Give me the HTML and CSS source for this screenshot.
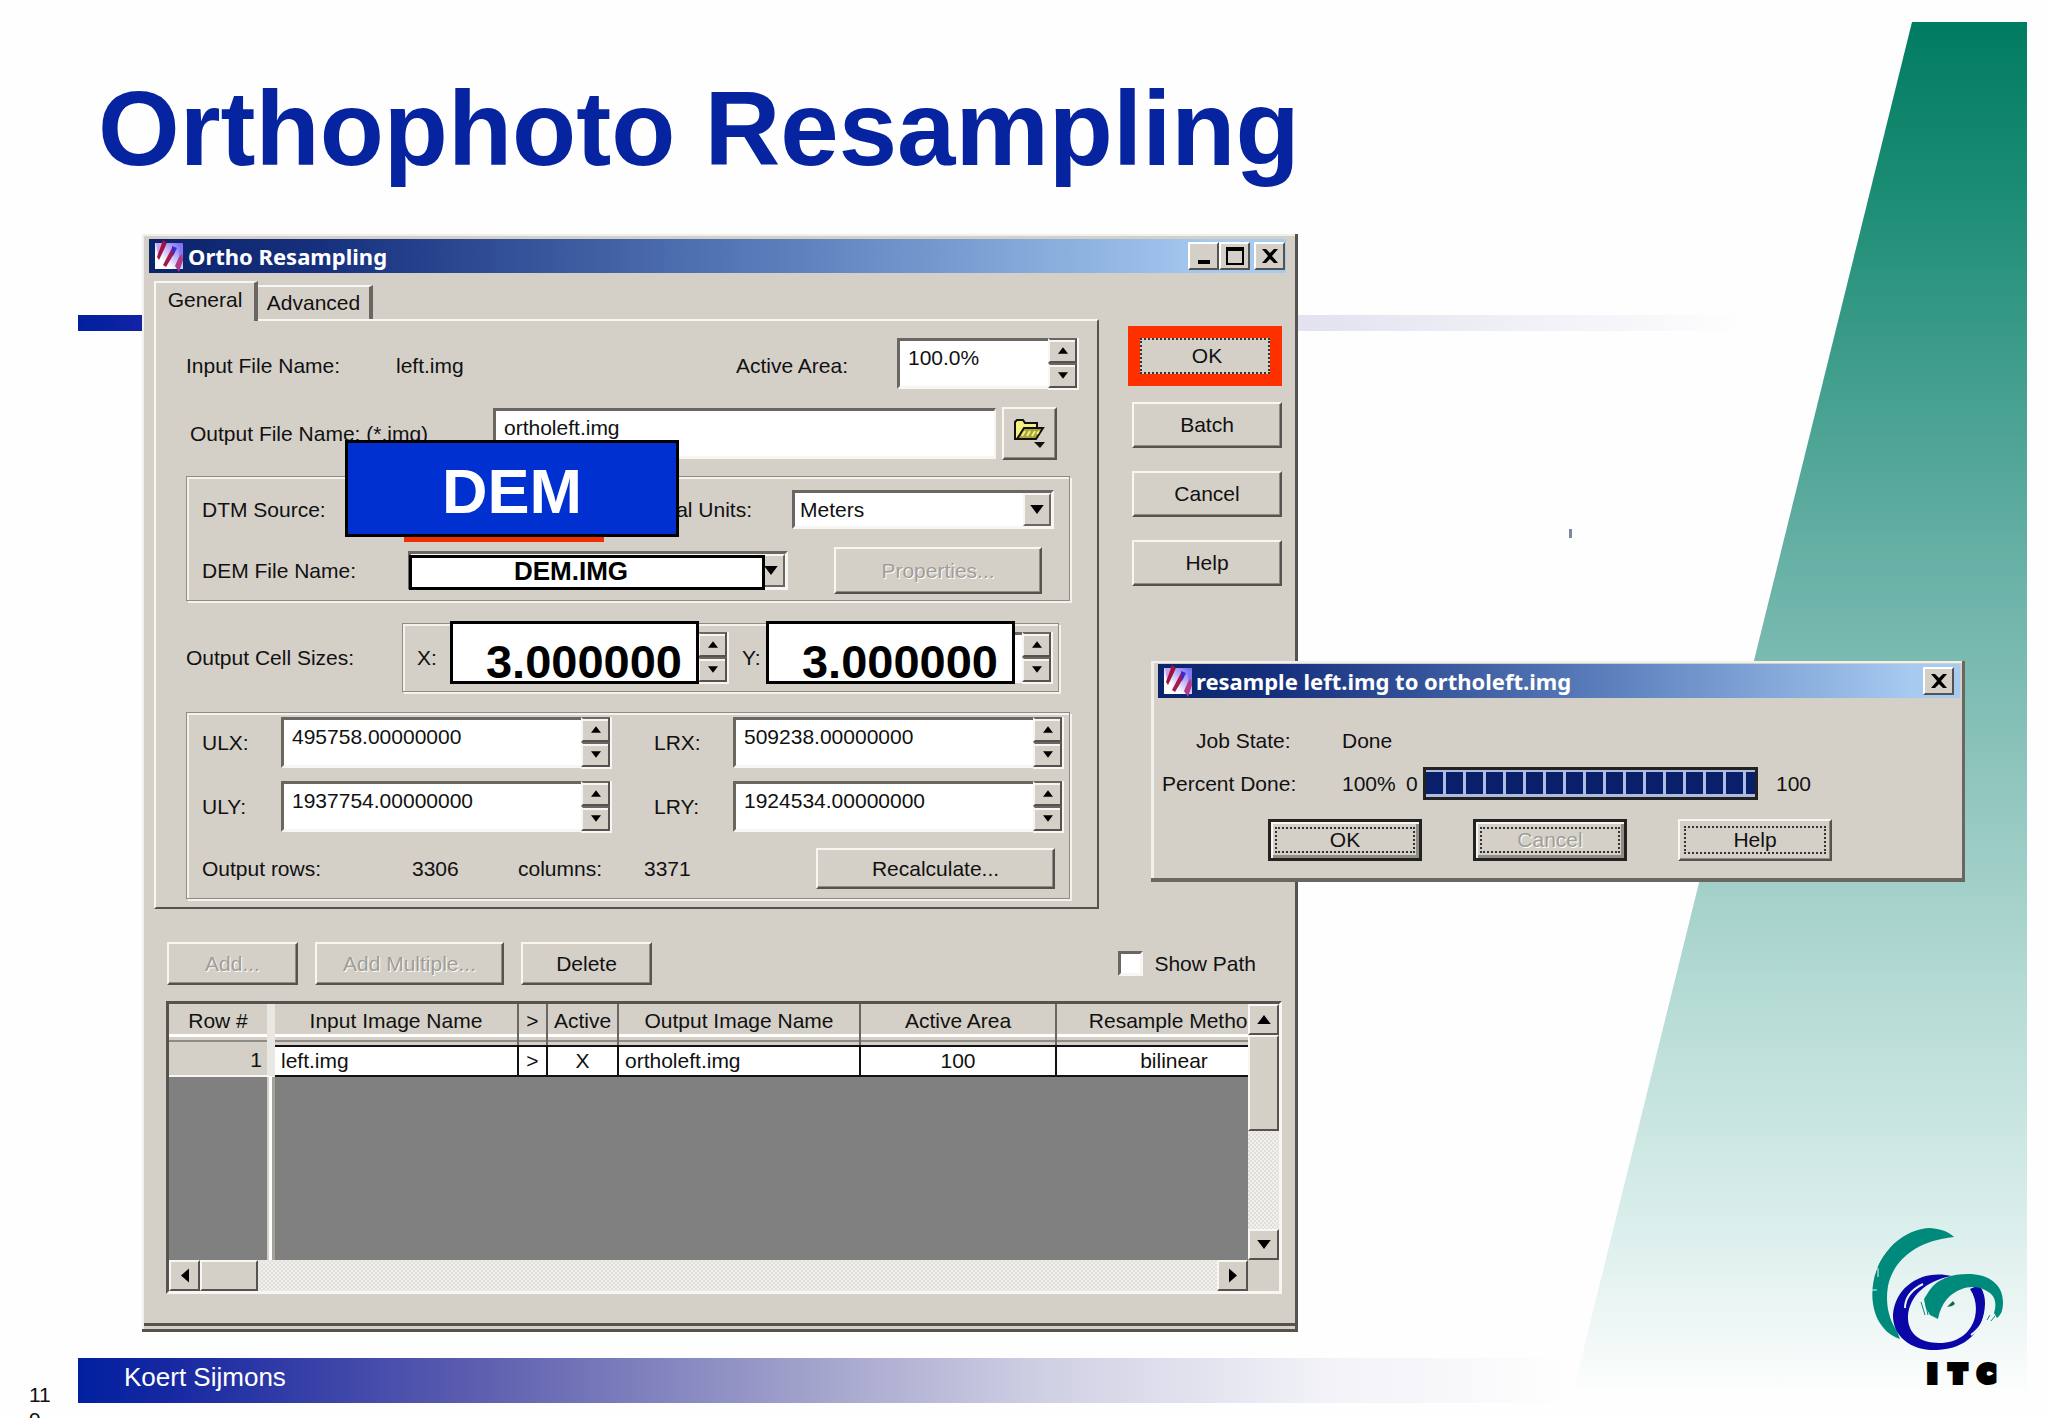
FILE: index.html
```html
<!DOCTYPE html>
<html lang="en">
<head>
<meta charset="utf-8">
<title>Orthophoto Resampling</title>
<link rel="stylesheet" href="styles.css">
</head>
<body>
<svg class="defs" aria-hidden="true">
  <defs>
    <linearGradient id="iconBg" x1="0" y1="1" x2="1" y2="0">
      <stop offset="0.3" stop-color="#ffffff"/>
      <stop offset="1" stop-color="#6a5cf0"/>
    </linearGradient>
    <symbol id="app-icon" viewBox="0 0 28 32">
      <rect x="0" y="3" width="28" height="26" fill="url(#iconBg)"/>
      <path d="M1 3h11l-4 9-5 3z" fill="#c9a4ec"/>
      <path d="M8 0L2 17l2 3 8-17z" fill="#a3123f"/>
      <path d="M18 6L8 25l3 2 9-15z" fill="#a5194f"/>
      <path d="M27 10l-7 16 4 6 4-12z" fill="#b03a86"/>
      <path d="M17 6l5 2-4 8z" fill="#3a2bd0"/>
      <path d="M25 3l3 2v8l-4 4z" fill="#8476f4"/>
    </symbol>
    <symbol id="up" viewBox="0 0 12 8"><path d="M6 0l6 8H0z"/></symbol>
    <symbol id="down" viewBox="0 0 12 8"><path d="M0 0h12L6 8z"/></symbol>
    <symbol id="left" viewBox="0 0 8 14"><path d="M8 0v14L0 7z"/></symbol>
    <symbol id="right" viewBox="0 0 8 14"><path d="M0 0v14l8-7z"/></symbol>
    <symbol id="close" viewBox="0 0 16 14"><path d="M0 0h4l4 4 4-4h4l-6 7 6 7h-4l-4-4-4 4H0l6-7z"/></symbol>
  </defs>
</svg>

<main class="slide">
  <div class="wedge"></div>
  <h1 class="headline">Orthophoto Resampling</h1>
  <div class="rule"></div>
  <div class="speck"></div>

  <section class="window window-main" aria-label="Ortho Resampling">
    <header class="titlebar">
      <svg class="app-icon"><use href="#app-icon"/></svg>
      <h2 class="caption">Ortho Resampling</h2>
      <button class="chrome" type="button" aria-label="Minimize"><svg width="20" height="18"><rect x="4" y="13" width="12" height="4"/></svg></button>
      <button class="chrome" type="button" aria-label="Maximize"><svg width="20" height="18"><path d="M1 0h18v18H1zM3 4v12h14V4z" fill-rule="evenodd"/></svg></button>
      <button class="chrome chrome-close" type="button" aria-label="Close"><svg width="16" height="14"><use href="#close"/></svg></button>
    </header>

    <div class="body">
      <div class="tabbed">
        <div class="tabs" role="tablist">
          <button class="tab tab-active" role="tab" type="button">General</button>
          <button class="tab" role="tab" type="button">Advanced</button>
        </div>
        <div class="panel">
          <div class="row row-input">
            <span>Input File Name:</span>
            <span>left.img</span>
            <label for="area">Active Area:</label>
            <div class="spin">
              <input id="area" type="text" value="100.0%">
              <div class="steps"><button type="button" aria-label="Increase"><svg class="tri"><use href="#up"/></svg></button><button type="button" aria-label="Decrease"><svg class="tri"><use href="#down"/></svg></button></div>
            </div>
          </div>

          <div class="row row-output">
            <label class="output-label" for="out">Output File Name: (*.img)</label>
            <input id="out" class="field" type="text" value="ortholeft.img">
            <button class="btn folder" type="button" aria-label="Browse">
              <svg width="34" height="30" viewBox="0 0 34 30">
                <path d="M2 20V3l2-2h6l2 3h12v5H12L5 20z" fill="#f4f27c" stroke="#111" stroke-width="2"/>
                <path d="M4 20l7-11h19l-7 11z" fill="#a7a43c" stroke="#111" stroke-width="2"/>
                <path d="M9 17l3-5M14 17l3-5M19 17l3-5M24 15l2-3" stroke="#f4f27c" stroke-width="2"/>
                <path d="M21 23h11l-5 6z" fill="#111"/>
              </svg>
            </button>
          </div>

          <div class="group group-dtm">
            <div class="row row-source">
              <span class="grow">DTM Source:</span>
              <label for="units">Vertical Units:</label>
              <div class="combo combo-units">
                <select id="units"><option>Meters</option></select>
                <span class="drop"><svg class="tri-big"><use href="#down"/></svg></span>
              </div>
            </div>
            <div class="row row-dem">
              <label class="dem-label" for="dem">DEM File Name:</label>
              <div class="combo combo-dem">
                <select id="dem"><option></option></select>
                <span class="drop"><svg class="tri-big"><use href="#down"/></svg></span>
              </div>
              <button class="btn btn-properties" type="button" disabled>Properties...</button>
            </div>
          </div>

          <div class="row row-cells">
            <span class="cells-label">Output Cell Sizes:</span>
            <div class="group group-cells">
              <label for="cx">X:</label>
              <div class="spin"><input id="cx" type="text"><div class="steps"><button type="button" aria-label="Increase"><svg class="tri"><use href="#up"/></svg></button><button type="button" aria-label="Decrease"><svg class="tri"><use href="#down"/></svg></button></div></div>
              <label for="cy">Y:</label>
              <div class="spin"><input id="cy" type="text"><div class="steps"><button type="button" aria-label="Increase"><svg class="tri"><use href="#up"/></svg></button><button type="button" aria-label="Decrease"><svg class="tri"><use href="#down"/></svg></button></div></div>
            </div>
          </div>

          <div class="group group-extent">
            <div class="extent">
              <label for="ulx">ULX:</label>
              <div class="spin"><input id="ulx" type="text" value="495758.00000000"><div class="steps"><button type="button" aria-label="Increase"><svg class="tri"><use href="#up"/></svg></button><button type="button" aria-label="Decrease"><svg class="tri"><use href="#down"/></svg></button></div></div>
              <label for="lrx">LRX:</label>
              <div class="spin"><input id="lrx" type="text" value="509238.00000000"><div class="steps"><button type="button" aria-label="Increase"><svg class="tri"><use href="#up"/></svg></button><button type="button" aria-label="Decrease"><svg class="tri"><use href="#down"/></svg></button></div></div>
              <label for="uly">ULY:</label>
              <div class="spin"><input id="uly" type="text" value="1937754.00000000"><div class="steps"><button type="button" aria-label="Increase"><svg class="tri"><use href="#up"/></svg></button><button type="button" aria-label="Decrease"><svg class="tri"><use href="#down"/></svg></button></div></div>
              <label for="lry">LRY:</label>
              <div class="spin"><input id="lry" type="text" value="1924534.00000000"><div class="steps"><button type="button" aria-label="Increase"><svg class="tri"><use href="#up"/></svg></button><button type="button" aria-label="Decrease"><svg class="tri"><use href="#down"/></svg></button></div></div>
            </div>
            <div class="row row-size">
              <span>Output rows:</span><span>3306</span><span>columns:</span><span>3371</span>
              <button class="btn" type="button">Recalculate...</button>
            </div>
          </div>
        </div>
      </div>

      <div class="actions">
        <button class="btn btn-marked" type="button">OK</button>
        <button class="btn" type="button">Batch</button>
        <button class="btn" type="button">Cancel</button>
        <button class="btn" type="button">Help</button>
      </div>
    </div>

    <div class="row toolbar">
      <button class="btn btn-add" type="button" disabled>Add...</button>
      <button class="btn btn-multiple" type="button" disabled>Add Multiple...</button>
      <button class="btn btn-add" type="button">Delete</button>
      <label class="show-path"><input type="checkbox">Show Path</label>
    </div>

    <div class="grid-frame">
      <div class="grid-view">
        <table class="images">
          <colgroup>
            <col class="c-row"><col class="c-in"><col class="c-arrow"><col class="c-active"><col class="c-out"><col class="c-area"><col class="c-method">
          </colgroup>
          <thead>
            <tr><th>Row #</th><th>Input Image Name</th><th>&gt;</th><th>Active</th><th>Output Image Name</th><th>Active Area</th><th>Resample Method</th></tr>
          </thead>
          <tbody>
            <tr><th>1</th><td>left.img</td><td class="mid">&gt;</td><td class="mid">X</td><td>ortholeft.img</td><td class="mid">100</td><td class="mid">bilinear</td></tr>
          </tbody>
        </table>
      </div>
      <div class="scroll scroll-y">
        <button type="button" aria-label="Scroll up"><svg class="tri-big"><use href="#up"/></svg></button>
        <span class="thumb"></span>
        <button class="last" type="button" aria-label="Scroll down"><svg class="tri-big"><use href="#down"/></svg></button>
      </div>
      <div class="scroll scroll-x">
        <button type="button" aria-label="Scroll left"><svg class="tri-side"><use href="#left"/></svg></button>
        <span class="thumb"></span>
        <button class="last" type="button" aria-label="Scroll right"><svg class="tri-side"><use href="#right"/></svg></button>
      </div>
    </div>

    <div class="callout callout-dem">DEM</div>
    <div class="callout callout-file">DEM.IMG</div>
    <div class="callout callout-size callout-x">3.000000</div>
    <div class="callout callout-size callout-y">3.000000</div>
  </section>

  <section class="window window-job" aria-label="Job status">
    <header class="titlebar">
      <svg class="app-icon"><use href="#app-icon"/></svg>
      <h2 class="caption">resample left.img to ortholeft.img</h2>
      <button class="chrome chrome-close" type="button" aria-label="Close"><svg width="16" height="14"><use href="#close"/></svg></button>
    </header>
    <div class="job-state"><span>Job State:</span><span>Done</span></div>
    <div class="job-progress">
      <label for="job">Percent Done:</label><span>100%</span><span>0</span>
      <progress id="job" max="100" value="100"></progress>
      <span>100</span>
    </div>
    <div class="job-actions">
      <button class="btn btn-default" type="button">OK</button>
      <button class="btn btn-default" type="button" disabled>Cancel</button>
      <button class="btn" type="button">Help</button>
    </div>
  </section>

  <svg class="logo" viewBox="0 0 144 166" role="img" aria-label="ITC">
    <path d="M84 9C79 4 72 1 60 0 38 1 18 16 8 38-1 60 1 84 12 98c6 8 12 11 18 13l-3-8C19 92 15 76 18 58 23 34 44 13 84 9z" fill="#008a7c"/>
    <path d="M27 12C16 22 8 33 5 45M2 62h5M8 40v9" fill="none" stroke="#e4f2f0" stroke-width="1"/>
    <path d="M82 48C52 41 26 58 23 86c-1 22 18 37 44 36 29-1 47-19 48-46 0-8-2-14-6-19l-9 4c6 9 7 19 5 28-4 16-17 26-36 26-20 0-32-10-31-28 2-18 16-34 44-39z" fill="#0a06a8"/>
    <path d="M53 56C43 61 35 69 35 80M117 74c0 16-6 26-16 33" fill="none" stroke="#e9f4f3" stroke-width="2"/>
    <path d="M68 91l-8-4-4-7-2-9 5-8C68 50 82 46 98 46c20 0 35 10 35 28 0 8-2 13-6 16l-3-5c3-9 1-16-4-20-10-7-20-7-28-4-12 4-21 14-24 30z" fill="#008a7c"/>
    <path d="M51 74l4 13M55 73l3 14M120 87l-3 5M125 88l-4 5" fill="none" stroke="#008a7c" stroke-width="1"/>
    <path d="M77 79l6-6 2 3-3 2z" fill="#0b6b3a"/>
    <text class="logo-text" x="58 80 108" y="154">ITC</text>
  </svg>

  <footer class="footer">
    <div class="page-no">119</div>
    <div class="author">Koert Sijmons</div>
  </footer>
</main>
</body>
</html>
```
FILE: styles.css
```css
* { box-sizing: border-box; }

body {
  margin: 0;
  background: #fefefe;
  color: #111;
  font: 21px/28px "Liberation Sans", Arial, sans-serif;
}

button, input, select {
  margin: 0;
  padding: 0;
  border: 0;
  border-radius: 0;
  color: inherit;
  font: inherit;
  appearance: none;
}

svg { display: block; flex: none; }
.defs { position: absolute; width: 0; height: 0; }

/* Slide */
.slide {
  position: relative;
  display: flex;
  flex-direction: column;
  height: 100vh;
  min-height: 1418px;
  overflow: hidden;
}

.wedge {
  position: absolute;
  top: 22px;
  right: 21px;
  bottom: 18px;
  width: 456px;
  background: linear-gradient(#007c62, #1b8c74 12%, #6fb4aa 42%, #b4dad4 70%, #dcefec 88%, #fefefe);
  clip-path: polygon(341px 0, 100% 0, 100% 100%, 0 100%);
}

.headline {
  position: relative;
  margin: 68px 0 0 98px;
  color: #0624a0;
  font-weight: bold;
  font-size: 105px;
  line-height: 122px;
}

.rule {
  width: 1670px;
  max-width: 100%;
  height: 16px;
  margin: 125px 0 0 78px;
  background: linear-gradient(90deg, #0020a0, #1422a5 4%, #a0a0cc 45%, #e2e2f0 73%, #fefefe);
}

.speck {
  position: absolute;
  top: 529px;
  left: 1569px;
  width: 3px;
  height: 9px;
  background: #8088a0;
}

.footer {
  display: flex;
  height: 60px;
  margin-top: auto;
}

.page-no {
  flex: none;
  width: 54px;
  margin: 24px 24px 0 0;
  padding-left: 29px;
  line-height: 25px;
  word-break: break-all;
}

.author {
  flex: 0 1 1760px;
  height: 45px;
  padding: 3px 46px;
  background: linear-gradient(90deg, #0020a0, #1a2aa2 6%, #5a5cae 22%, #a3a4cc 42%, #d0d0e4 55%, #f2f2f8 71%, #fefefe 85%);
  color: #fff;
  font-size: 26px;
  line-height: 32px;
}

.logo {
  position: absolute;
  right: 34px;
  bottom: 24px;
  width: 144px;
  height: 166px;
}

.logo-text {
  fill: #000;
  stroke: #000;
  stroke-width: 6px;
  font: bold 23px "DejaVu Sans", sans-serif;
}

/* Windows */
.window {
  position: absolute;
  background: #d4d0c8;
}

.window-main {
  top: 234px;
  left: 142px;
  width: 1156px;
  padding: 5px 9px 35px 7px;
  border: solid #55524f;
  border-width: 0 3px 3px 0;
  box-shadow: inset 2px 2px #f2f0ec, inset 0 -3px #d4d0c8, inset 0 -6px #55524f;
}

.titlebar {
  display: flex;
  align-items: center;
  height: 34px;
  padding: 0 1px 0 6px;
  background: linear-gradient(90deg, #0a246a, #16307e 15%, #5f83bf 58%, #a6caf0 94%);
}

.app-icon { width: 28px; height: 32px; }

.caption {
  flex: 1;
  margin: 0 0 0 5px;
  color: #fff;
  font: bold 22px/30px "Noto Sans", sans-serif;
  white-space: nowrap;
}

.chrome {
  display: flex;
  align-items: center;
  justify-content: center;
  width: 31px;
  height: 28px;
  border: 2px solid;
  border-color: #fff #55524f #55524f #fff;
  background: #d4d0c8;
}

.chrome-close { margin-left: 4px; }

.btn {
  position: relative;
  border: 2px solid;
  border-color: #f8f6f2 #55524f #55524f #f8f6f2;
  background: #d4d0c8;
  box-shadow: inset -1px -1px #8f8c86;
  text-align: center;
}

.btn:disabled { color: #a09d97; text-shadow: 1px 1px #fff; }

.body { display: flex; gap: 33px; margin: 8px 0 0 5px; }
.tabbed { width: 945px; }

.tabs { display: flex; align-items: flex-end; height: 38px; }

.tab {
  width: 115px;
  height: 34px;
  border: solid;
  border-width: 2px 4px 0 0;
  border-color: #f8f6f2 #6a6763 #6a6763 #f8f6f2;
  background: #d4d0c8;
}

.tab-active {
  z-index: 1;
  width: 104px;
  height: 40px;
  margin-bottom: -2px;
  padding-bottom: 4px;
  border-left-width: 2px;
}

.panel {
  padding: 17px 27px 8px 30px;
  border: 2px solid;
  border-color: #f8f6f2 #55524f #55524f #f8f6f2;
}

.row { display: flex; align-items: center; }
.row-input { display: grid; grid-template-columns: 210px 340px 161px 182px; }
.row-input > span, .row-input > label { padding-top: 4px; }
.row-output { margin-top: 17px; }
.output-label { width: 307px; padding-left: 4px; white-space: nowrap; }

.field, .spin input {
  height: 51px;
  padding: 0 8px 12px;
  border: solid;
  border-width: 3px 2px 3px 3px;
  border-color: #6a6763 #f8f6f2 #f8f6f2 #6a6763;
  background: #fff;
}

.field { width: 503px; }
.folder { display: grid; place-items: center; width: 55px; height: 53px; margin-left: 6px; }

.spin { display: flex; height: 52px; }
.spin input { flex: 1; min-width: 0; border-right: 0; }

.steps {
  display: flex;
  flex-direction: column;
  width: 31px;
  border: solid #f8f6f2;
  border-width: 0 2px 2px 0;
}

.steps button {
  display: grid;
  flex: 1;
  place-items: center;
  border: 2px solid;
  border-color: #6a6763 #55524f #55524f #f8f6f2;
  background: #d4d0c8;
  box-shadow: inset 0 2px #f8f6f2;
}

.tri { width: 10px; height: 7px; }
.tri-big { width: 14px; height: 9px; }
.tri-side { width: 8px; height: 15px; }

.group {
  border: 1px solid #8f8c86;
  box-shadow: inset 2px 2px #f4f2ee, 2px 2px #f4f2ee;
}

.group-dtm { margin-top: 16px; padding: 13px 15px 6px; }
.row-source label { margin-right: 40px; }
.grow { flex: 1; }
.row-dem { margin-top: 18px; }
.dem-label { width: 206px; }

.combo { position: relative; height: 39px; }
.combo-units { width: 262px; }
.combo-dem { width: 380px; }

.combo select {
  width: 100%;
  height: 100%;
  padding-left: 5px;
  border: 3px solid;
  border-color: #6a6763 #f8f6f2 #f8f6f2 #6a6763;
  background: #fff;
}

.drop {
  position: absolute;
  top: 3px;
  right: 3px;
  bottom: 3px;
  display: grid;
  place-items: center;
  width: 28px;
  border: 2px solid;
  border-color: #f8f6f2 #6a6763 #6a6763 #f8f6f2;
  background: #d4d0c8;
  pointer-events: none;
}

.btn-properties { width: 208px; height: 47px; margin-left: 46px; }

.row-cells { margin-top: 22px; }
.cells-label { width: 216px; }

.group-cells {
  display: grid;
  grid-template-columns: 34px 278px 13px 25px 286px;
  align-items: center;
  width: 657px;
  height: 69px;
  padding-left: 14px;
}

.group-cells label:nth-of-type(2) { grid-column: 4; }

.group-extent { margin-top: 20px; padding: 4px 5px 9px 15px; }

.extent {
  display: grid;
  grid-template-columns: 79px 331px 42px 79px 331px;
  row-gap: 12px;
  align-items: center;
  justify-content: space-between;
}

.extent label:nth-of-type(even) { grid-column: 4; }

.row-size { display: grid; grid-template-columns: 210px 106px 126px 172px 239px; margin-top: 15px; }
.row-size .btn { height: 41px; }

.actions { display: flex; flex-direction: column; gap: 23px; width: 150px; padding-top: 52px; }
.actions .btn { height: 46px; }

.btn-marked::after {
  content: "";
  position: absolute;
  inset: -9px -2px -9px -6px;
  border: 12px solid #ff3000;
  outline: 2px dotted #333;
  outline-offset: -14px;
}

.toolbar { gap: 17px; margin: 33px 30px 0 18px; }
.toolbar .btn { height: 43px; }
.btn-add { width: 131px; }
.btn-multiple { width: 189px; }

.show-path { display: flex; gap: 11px; align-items: center; margin-left: auto; }

.show-path input {
  width: 25px;
  height: 25px;
  border: 3px solid;
  border-color: #6a6763 #f8f6f2 #f8f6f2 #6a6763;
  background: #fff;
}

/* Image list */
.grid-frame {
  display: grid;
  grid-template-columns: 1fr 31px;
  grid-template-rows: 256px 31px;
  margin: 16px 4px 0 17px;
  border: 3px solid;
  border-color: #55524f #f8f6f2 #f8f6f2 #55524f;
}

.grid-view {
  overflow: hidden;
  background: linear-gradient(90deg, #808080 98px, #d4d0c8 98px 100px, #fff 100px 103px, #a5a29c 103px 106px, #808080 106px);
}

.images {
  width: 1124px;
  border-spacing: 0;
  table-layout: fixed;
}

.c-row { width: 106px; }
.c-in { width: 244px; }
.c-arrow { width: 29px; }
.c-active { width: 71px; }
.c-out { width: 242px; }
.c-area { width: 196px; }
.c-method { width: 236px; }

.images th, .images td {
  overflow: hidden;
  padding: 0;
  font-weight: normal;
  line-height: 28px;
  white-space: nowrap;
}

.images thead th {
  height: 41px;
  padding-bottom: 8px;
  border-right: 2px solid #6a6763;
  background: linear-gradient(#d4d0c8 30px, #fff 30px 33px, #d4d0c8 33px 36px, #8f8c86 36px 38px, #d4d0c8 38px);
}

.images th:first-child { border-right: 8px solid #e9e7e2; }

.images tbody th {
  height: 32px;
  padding-right: 5px;
  border-bottom: 2px solid #f8f6f2;
  background: #d4d0c8;
  text-align: right;
}

.images td {
  padding-left: 6px;
  border: solid #111;
  border-width: 2px 2px 2px 0;
  background: #fff;
}

.images .mid { padding: 0; text-align: center; }

.scroll {
  display: flex;
  background: repeating-conic-gradient(#e2dfda 0 25%, #f2f0ed 0 50%) 0 0 / 4px 4px;
}

.scroll-y { flex-direction: column; }

.scroll button, .thumb {
  display: grid;
  flex: none;
  place-items: center;
  width: 31px;
  height: 31px;
  border: 2px solid;
  border-color: #f8f6f2 #55524f #55524f #f8f6f2;
  background: #d4d0c8;
}

.scroll-y .thumb { height: 96px; }
.scroll-x .thumb { width: 58px; }
.scroll-y .last { margin-top: auto; }
.scroll-x .last { margin-left: auto; }

/* Annotations laid over the dialog */
.callout {
  position: absolute;
  border: 3px solid #000;
  background: #fff;
  color: #000;
  font-weight: bold;
  text-align: center;
}

.callout-dem {
  top: 206px;
  left: 203px;
  width: 334px;
  height: 97px;
  background: #0030d0;
  color: #fff;
  font-size: 63px;
  line-height: 96px;
}

.callout-dem::after {
  content: "";
  position: absolute;
  top: 94px;
  left: 56px;
  width: 200px;
  height: 5px;
  background: #f03000;
}

.callout-file {
  top: 321px;
  left: 267px;
  width: 356px;
  height: 35px;
  padding-right: 32px;
  font-size: 26px;
  line-height: 26px;
}

.callout-size {
  top: 387px;
  width: 249px;
  height: 63px;
  padding-right: 14px;
  font-size: 47px;
  line-height: 76px;
  text-align: right;
}

.callout-x { left: 308px; }
.callout-y { left: 624px; }

/* Job dialog */
.window-job {
  top: 661px;
  left: 1151px;
  width: 814px;
  height: 221px;
  padding: 3px 2px 0 7px;
  border: solid #6a6763;
  border-width: 0 3px 4px 0;
  box-shadow: inset 3px 2px #f2f0ec;
}

.window-job .titlebar { padding-right: 6px; }
.window-job .caption { margin-left: 4px; }

.job-state { display: grid; grid-template-columns: 146px 1fr; margin: 29px 0 0 38px; }

.job-progress {
  display: grid;
  grid-template-columns: 180px 64px 17px 335px 1fr;
  align-items: center;
  margin: 12px 0 0 4px;
}

.job-progress span:last-child { margin-left: 18px; }

progress {
  width: 335px;
  height: 33px;
  border: 3px solid #222;
  appearance: none;
}

progress::-webkit-progress-bar { background: #aebce0; }

progress::-webkit-progress-value {
  border: solid #aebce0;
  border-width: 2px 0 3px;
  background: repeating-linear-gradient(90deg, #0a1f6a 0 17px, #aebce0 17px 20px);
}

.job-actions { display: flex; gap: 51px; margin: 19px 0 0 110px; }
.job-actions .btn { width: 154px; height: 42px; }

.job-actions .btn::after {
  content: "";
  position: absolute;
  inset: 5px 4px;
  border: 2px dotted #333;
}

.btn-default { border: 3px solid #222; box-shadow: inset 2px 2px #f8f6f2, inset -3px -3px #8f8c86; }
```
